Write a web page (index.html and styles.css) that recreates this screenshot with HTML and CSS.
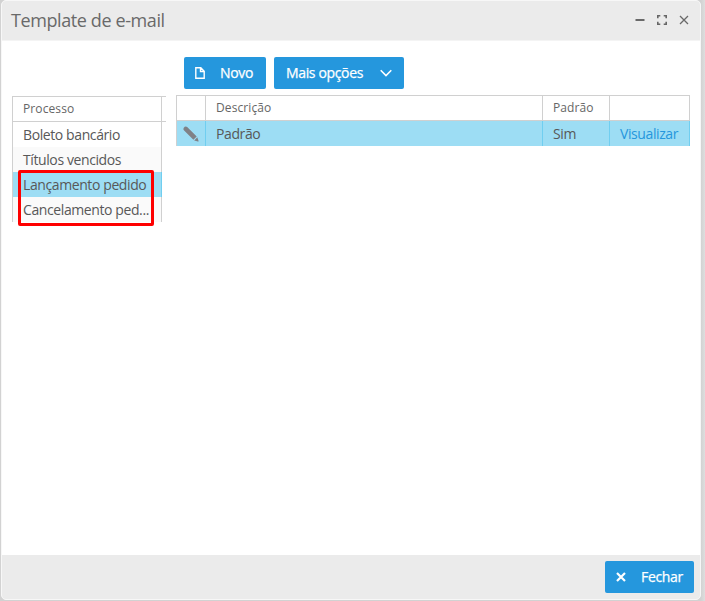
FILE: index.html
```
<!DOCTYPE html>
<html lang="pt-BR">
<head>
<meta charset="utf-8">
<title>Template de e-mail</title>
<link rel="stylesheet" href="styles.css">
</head>
<body>
<div class="window">
  <header class="titlebar">
    <h1 class="title">Template de e-mail</h1>
    <div class="tools">
      <svg width="10" height="12" viewBox="0 0 10 12"><path d="M.5 6h9" stroke="#696969" stroke-width="2"/></svg>
      <svg width="10" height="10" viewBox="0 0 10 10" fill="none" stroke="#666" stroke-width="1.6"><path d="M.8 3.300V.8h2.500M6.700.8h2.500v2.500M9.200 6.700v2.500h-2.500M3.300 9.200H.8V6.700"/></svg>
      <svg width="10" height="10" viewBox="0 0 10 10"><path d="M1 1l8 8M9 1L1 9" stroke="#696969" stroke-width="1.3"/></svg>
    </div>
  </header>
  <main class="content">
    <section class="side">
      <div class="process">
        <div class="process-head">Processo</div>
        <div class="process-rows">
          <div class="process-row">Boleto bancário</div>
          <div class="process-row alt">Títulos vencidos</div>
          <div class="process-row selected">Lançamento pedido</div>
          <div class="process-row alt">Cancelamento ped...</div>
        </div>
        <div class="highlight"></div>
      </div>
    </section>
    <section class="main">
      <div class="toolbar">
        <button class="btn btn-new">
          <svg width="10" height="12" viewBox="0 0 10 12" fill="none" stroke="#fff" stroke-width="1.4"><path d="M.8.8h5L9.200 4.200v7H.8zM5.500.8v3.700h3.700"/></svg>
          <span>Novo</span>
        </button>
        <button class="btn btn-more">
          <span>Mais opções</span>
          <svg width="12" height="8" viewBox="0 0 12 8" fill="none" stroke="#fff" stroke-width="1.6"><path d="M.7 1.200L6 6.500l5.300-5.300"/></svg>
        </button>
      </div>
      <div class="grid">
        <div class="cell head"></div>
        <div class="cell head">Descrição</div>
        <div class="cell head">Padrão</div>
        <div class="cell head"></div>
        <div class="cell row edit">
          <svg width="16" height="16" viewBox="0 0 16 16" fill="#808186"><path d="M.8 1.800Q2.200-.2 4.200 1l9.500 9.500-3.300 3.300L.9 4.300Q0 3.200.8 1.800zM14.300 11.300l1.300 3.600q.1.800-.7.700l-3.700-1.200z"/></svg>
        </div>
        <div class="cell row">Padrão</div>
        <div class="cell row">Sim</div>
        <div class="cell row"><a class="link">Visualizar</a></div>
      </div>
    </section>
  </main>
  <footer class="footer">
    <button class="btn btn-close">
      <svg width="10" height="10" viewBox="0 0 10 10"><path d="M1 1l8 8M9 1L1 9" stroke="#fff" stroke-width="2.200"/></svg>
      <span>Fechar</span>
    </button>
  </footer>
</div>
</body>
</html>
```
FILE: styles.css
```
* { box-sizing: border-box; }
body {
  margin: 0;
  height: 601px;
  overflow: hidden;
  padding: 0 4px 1px 1px;
  background: linear-gradient(to right, #d2d2d2 0, #d2d2d2 701px, #dedede 705px);
  font-family: "Open Sans", "Noto Sans", sans-serif;
  font-size: 14px;
  letter-spacing: -.4px;
  color: #585858;
}
.window {
  height: 600px;
  display: flex;
  flex-direction: column;
  border: 1px solid #f7f7f7;
  border-radius: 5px;
  background: #fff;
  overflow: hidden;
}
.titlebar {
  flex: none;
  height: 40px;
  display: flex;
  justify-content: space-between;
  align-items: flex-start;
  padding: 0 11px 0 9px;
  background: #ebebeb;
  border-bottom: 1px solid #f4f4f4;
}
.title { margin: 0; font-size: 18px; line-height: 38px; font-weight: 400; color: #696969; white-space: nowrap; }
.tools { display: flex; align-items: center; gap: 12px; height: 38px; }
svg { display: block; flex: none; }
.content { flex: 1; display: flex; gap: 10px; padding: 16px 10px 0; }
.side { width: 154px; padding-top: 39px; }
.process { position: relative; }
.process-head {
  height: 26px;
  padding: 0 10px;
  line-height: 23px;
  border: 1px solid #d0d0d0;
  border-right: 0;
  background: linear-gradient(#d0d0d0, #d0d0d0) 148px 0 / 1px 100% no-repeat;
  font-size: 12px;
  letter-spacing: .1px;
  color: #666;
}
.process-rows { width: 150px; border: 1px solid #d0d0d0; border-width: 0 1px; }
.process-row { height: 25px; line-height: 26px; padding-left: 10px; white-space: nowrap; }
.alt { background: #fafafa; }
.selected { background: #9dddf4; margin-right: -1px; border-right: 1px solid #70cef0; }
.highlight {
  position: absolute;
  left: 6px;
  top: 74px;
  width: 136px;
  height: 56px;
  border: 3px solid #fe0000;
  border-radius: 2px;
}
.main { width: 514px; }
.toolbar { display: flex; gap: 8px; padding-left: 8px; margin-bottom: 6px; }
.btn {
  display: flex;
  align-items: center;
  height: 32px;
  padding: 0;
  border: 0;
  border-radius: 2px;
  background: #2597dd;
  color: #fff;
  font: 14px/32px "Open Sans", "Noto Sans", sans-serif;
  letter-spacing: -.35px;
  white-space: nowrap;
  -webkit-text-stroke: .25px #fff;
}
.btn-new { width: 82px; padding-left: 11px; gap: 15px; }
.btn-more { width: 130px; padding: 0 12px; justify-content: space-between; }
.btn-close { width: 89px; padding-left: 11px; gap: 15px; }
.grid {
  display: grid;
  grid-template-columns: 30px 337px 67px 80px;
  grid-template-rows: 26px 25px;
}
.cell { padding-left: 10px; border-right: 1px solid #d0d0d0; white-space: nowrap; line-height: 26px; }
.cell:nth-child(4n + 1) { border-left: 1px solid #d0d0d0; }
.head { border-top: 1px solid #d0d0d0; border-bottom: 1px solid #d0d0d0; font-size: 12px; line-height: 23px; letter-spacing: .1px; color: #666; }
.row { background: #9dddf4; border-right-color: #70cef0; }
.edit { padding: 5px 0 0 6px; }
.link { color: #2597dd; }
.footer {
  flex: none;
  height: 44px;
  display: flex;
  justify-content: flex-end;
  padding: 6px 6px 0;
  background: #ebebeb;
}
```
